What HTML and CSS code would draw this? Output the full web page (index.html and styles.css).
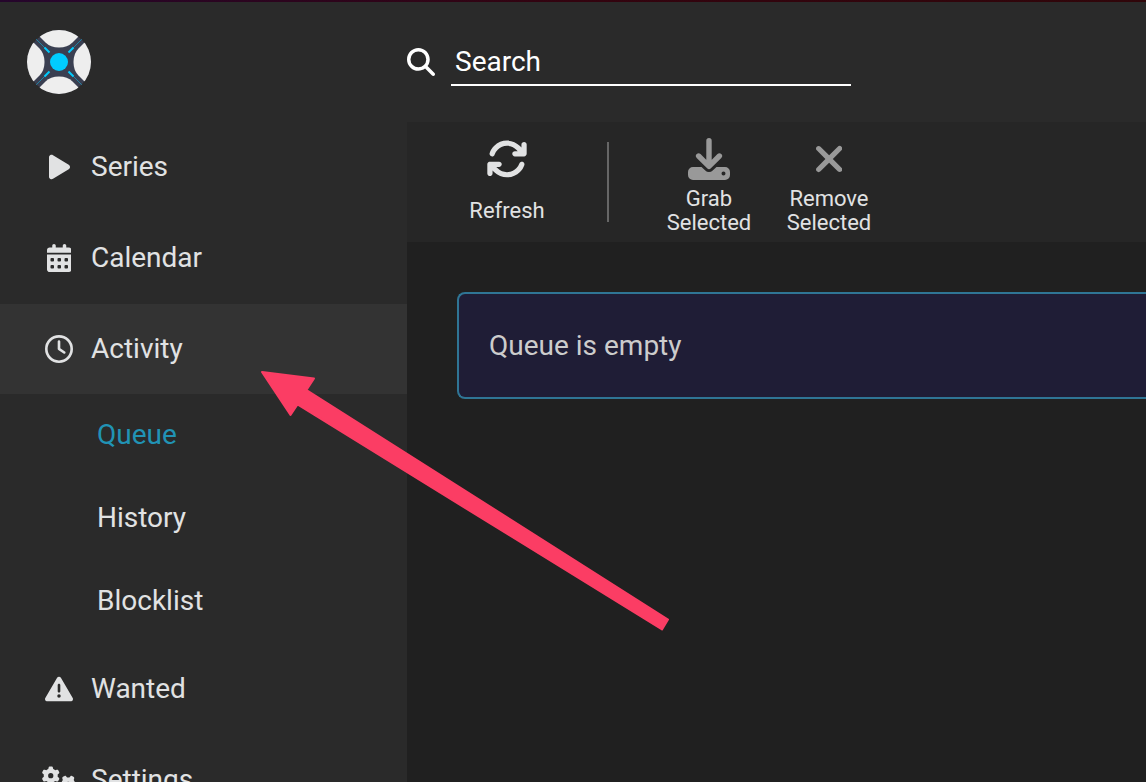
FILE: index.html
```html
<!DOCTYPE html>
<html lang="en">
<head>
<meta charset="utf-8">
<meta name="viewport" content="width=device-width, initial-scale=1">
<title>Queue</title>
<link rel="stylesheet" href="styles.css">
</head>
<body>
<div class="app">
  <header class="header">
    <a class="brand" href="#" aria-label="Home">
      <svg class="logo" viewBox="0 0 64 64" aria-hidden="true">
        <defs>
          <clipPath id="disc"><circle cx="32" cy="32" r="32"/></clipPath>
          <path id="lobe" d="M12.5 6.5 18.5 12.5Q23.5 17.5 32 17.5T45.500 12.500L51.500 6.500V-5H12.500Z"/>
          <g id="arm"><path d="M8.500 8.500 18 18" stroke="#2380a0" stroke-width="1"/><path d="M17.500 17.500 22.500 22.500" stroke="#0cf" stroke-width="2"/></g>
        </defs>
        <g clip-path="url(#disc)">
          <circle cx="32" cy="32" r="32" fill="#3a3f51"/>
          <g fill="#eee">
            <use href="#lobe"/>
            <use href="#lobe" transform="rotate(90 32 32)"/>
            <use href="#lobe" transform="rotate(180 32 32)"/>
            <use href="#lobe" transform="rotate(270 32 32)"/>
          </g>
          <use href="#arm"/>
          <use href="#arm" transform="rotate(90 32 32)"/>
          <use href="#arm" transform="rotate(180 32 32)"/>
          <use href="#arm" transform="rotate(270 32 32)"/>
          <circle cx="32" cy="32" r="9" fill="#0cf"/>
        </g>
      </svg>
    </a>
    <form class="search">
      <label class="search-label" for="search" aria-label="Search">
        <svg class="icon" viewBox="0 0 512 512" aria-hidden="true"><path d="M416 208c0 45.900-14.900 88.300-40 122.700L502.600 457.400c12.500 12.500 12.500 32.800 0 45.300s-32.800 12.500-45.300 0L330.700 376c-34.400 25.200-76.800 40-122.700 40C93.100 416 0 322.900 0 208S93.100 0 208 0S416 93.100 416 208zM208 352a144 144 0 1 0 0-288 144 144 0 1 0 0 288z"/></svg>
      </label>
      <input class="search-input" id="search" type="text" placeholder="Search">
    </form>
  </header>

  <nav class="sidebar" aria-label="Main">
    <ul class="menu">
      <li><a class="item" href="#"><span class="item-icon"><svg class="icon" viewBox="0 0 384 512" aria-hidden="true"><path d="M73 39c-14.800-9.100-33.400-9.400-48.500-.9S0 62.600 0 80V432c0 17.400 9.400 33.400 24.500 41.900s33.700 8.100 48.500-.9L361 297c14.300-8.700 23-24.200 23-41s-8.700-32.200-23-41L73 39z"/></svg></span>Series</a></li>
      <li><a class="item" href="#"><span class="item-icon"><svg class="icon" viewBox="0 0 448 512" aria-hidden="true"><path d="M128 0c17.700 0 32 14.300 32 32V64H288V32c0-17.700 14.300-32 32-32s32 14.300 32 32V64h48c26.500 0 48 21.500 48 48v48H0V112C0 85.500 21.500 64 48 64H96V32c0-17.700 14.300-32 32-32zM0 192H448V464c0 26.500-21.500 48-48 48H48c-26.500 0-48-21.500-48-48V192zm64 80v32c0 8.800 7.200 16 16 16h32c8.800 0 16-7.200 16-16V272c0-8.800-7.200-16-16-16H80c-8.800 0-16 7.200-16 16zm128 0v32c0 8.800 7.200 16 16 16h32c8.800 0 16-7.200 16-16V272c0-8.800-7.200-16-16-16H208c-8.800 0-16 7.200-16 16zm144-16c-8.800 0-16 7.200-16 16v32c0 8.800 7.200 16 16 16h32c8.800 0 16-7.200 16-16V272c0-8.800-7.200-16-16-16H336zM64 400v32c0 8.800 7.200 16 16 16h32c8.800 0 16-7.200 16-16V400c0-8.800-7.200-16-16-16H80c-8.800 0-16 7.200-16 16zm144-16c-8.800 0-16 7.200-16 16v32c0 8.800 7.200 16 16 16h32c8.800 0 16-7.200 16-16V400c0-8.800-7.200-16-16-16H208zm112 16v32c0 8.800 7.200 16 16 16h32c8.800 0 16-7.200 16-16V400c0-8.800-7.200-16-16-16H336c-8.800 0-16 7.200-16 16z"/></svg></span>Calendar</a></li>
      <li>
        <a class="item item-open" href="#"><span class="item-icon"><svg class="icon" viewBox="0 0 512 512" aria-hidden="true"><path d="M464 256A208 208 0 1 1 48 256a208 208 0 1 1 416 0zM0 256a256 256 0 1 0 512 0A256 256 0 1 0 0 256zM232 120V256c0 8 4 15.500 10.700 20l96 64c11 7.400 25.900 4.400 33.300-6.700s4.400-25.900-6.700-33.300L280 243.200V120c0-13.300-10.700-24-24-24s-24 10.700-24 24z"/></svg></span>Activity</a>
        <ul class="submenu">
          <li><a class="subitem subitem-current" href="#" aria-current="page">Queue</a></li>
          <li><a class="subitem" href="#">History</a></li>
          <li><a class="subitem" href="#">Blocklist</a></li>
        </ul>
      </li>
      <li><a class="item" href="#"><span class="item-icon"><svg class="icon" viewBox="0 0 512 512" aria-hidden="true"><path d="M256 32c14.200 0 27.300 7.500 34.500 19.800l216 368c7.300 12.400 7.300 27.700 .2 40.100S486.300 480 472 480H40c-14.300 0-27.600-7.700-34.700-20.100s-7-27.800 .2-40.100l216-368C228.700 39.500 241.800 32 256 32zm0 128c-13.300 0-24 10.700-24 24V296c0 13.300 10.700 24 24 24s24-10.700 24-24V184c0-13.300-10.700-24-24-24zm32 224a32 32 0 1 0 -64 0 32 32 0 1 0 64 0z"/></svg></span>Wanted</a></li>
      <li><a class="item" href="#"><span class="item-icon"><svg class="icon" viewBox="0 0 640 512" aria-hidden="true"><defs><path id="gear" d="M308.500 135.300c7.100-6.300 9.900-16.200 6.200-25c-2.300-5.300-4.800-10.500-7.600-15.500L304 89.400c-3-5-6.300-9.900-9.800-14.600c-5.700-7.600-15.700-10.100-24.700-7.100l-28.200 9.300c-10.700-8.800-23-16-36.200-20.900L199 27.100c-1.900-9.300-9.100-16.700-18.500-17.800C173.900 8.400 167.200 8 160.400 8h-.7c-6.800 0-13.500 .4-20.100 1.200c-9.400 1.100-16.600 8.600-18.500 17.800L115 56.100c-13.300 5-25.500 12.100-36.200 20.900L50.500 67.800c-9-3-19-.5-24.700 7.100c-3.500 4.700-6.800 9.600-9.900 14.600l-3 5.300c-2.800 5-5.300 10.200-7.600 15.600c-3.700 8.700-.9 18.600 6.200 25l22.200 19.800C32.600 161.900 32 168.900 32 176s.6 14.100 1.700 20.900L11.500 216.700c-7.100 6.300-9.900 16.200-6.200 25c2.300 5.300 4.800 10.500 7.600 15.600l3 5.200c3 5.100 6.300 9.900 9.900 14.600c5.700 7.600 15.700 10.100 24.700 7.100l28.200-9.300c10.700 8.800 23 16 36.200 20.900l6.100 29.100c1.900 9.300 9.100 16.700 18.500 17.800c6.700 .8 13.500 1.200 20.400 1.200s13.700-.4 20.400-1.200c9.400-1.100 16.600-8.600 18.500-17.800l6.100-29.100c13.300-5 25.500-12.100 36.200-20.900l28.200 9.300c9 3 19 .5 24.700-7.100c3.500-4.700 6.800-9.500 9.800-14.600l3.100-5.400c2.800-5 5.300-10.200 7.600-15.500c3.700-8.700 .9-18.600-6.200-25l-22.200-19.800c1.100-6.800 1.700-13.800 1.700-20.900s-.6-14.100-1.700-20.900l22.200-19.800zM112 176a48 48 0 1 1 96 0 48 48 0 1 1 -96 0z"/></defs><use href="#gear"/><use href="#gear" transform="translate(480 336) rotate(90) translate(-160 -176)"/></svg></span>Settings</a></li>
    </ul>
  </nav>

  <main class="content">
    <div class="toolbar" role="toolbar" aria-label="Queue actions">
      <button class="tool" type="button">
        <svg class="tool-icon" viewBox="0 0 512 512" aria-hidden="true"><path d="M105.100 202.600c7.700-21.800 20.200-42.300 37.800-59.800c62.500-62.500 163.800-62.500 226.300 0L386.300 160H352c-17.700 0-32 14.300-32 32s14.300 32 32 32H463.900c17.700 0 32-14.300 32-32V80c0-17.700-14.300-32-32-32s-32 14.300-32 32v35.200L414.400 97.600c-87.500-87.500-229.300-87.500-316.800 0C73.200 122 55.600 150.700 44.800 181.400c-5.900 16.700 2.900 34.900 19.500 40.800s34.900-2.900 40.800-19.500zM39 289.300c-5 1.500-9.800 4.200-13.700 8.200c-4 4-6.700 8.800-8.100 14c-.3 1.200-.6 2.500-.8 3.800c-.3 1.700-.4 3.400-.4 5.100V432c0 17.700 14.300 32 32 32s32-14.300 32-32V396.900l17.600 17.500c87.500 87.400 229.300 87.400 316.700 0c24.400-24.400 42.100-53.100 52.900-83.700c5.900-16.700-2.900-34.900-19.500-40.800s-34.900 2.900-40.800 19.500c-7.700 21.800-20.200 42.300-37.800 59.800c-62.500 62.500-163.800 62.500-226.300 0L125.600 352H160c17.700 0 32-14.300 32-32s-14.300-32-32-32H48.400c-1.600 0-3.200 .1-4.800 .3s-3.100 .5-4.600 1z"/></svg>
        <span class="tool-label">Refresh</span>
      </button>
      <div class="separator"></div>
      <button class="tool" type="button" disabled>
        <svg class="tool-icon" viewBox="0 0 42 42" aria-hidden="true"><path d="M21 2.800V28M10.600 18 21 28.400 31.400 18" fill="none" stroke="currentColor" stroke-width="5.400" stroke-linecap="round" stroke-linejoin="round"/><path fill-rule="evenodd" d="M5 29H13.500L17.300 32.500a5.300 5.300 0 0 0 7.400 0L28.500 29H37a5 5 0 0 1 5 5V37a5 5 0 0 1-5 5H5a5 5 0 0 1-5-5V34a5 5 0 0 1 5-5ZM35.500 33.500a2 2 0 1 0 0 4 2 2 0 0 0 0-4Z"/></svg>
        <span class="tool-label">Grab Selected</span>
      </button>
      <button class="tool" type="button" disabled>
        <svg class="tool-icon" viewBox="0 0 320 512" aria-hidden="true"><path d="M310.600 150.600c12.500-12.500 12.500-32.800 0-45.300s-32.800-12.500-45.300 0L160 210.700 54.600 105.400c-12.500-12.500-32.800-12.500-45.300 0s-12.500 32.800 0 45.300L114.700 256 9.400 361.400c-12.500 12.500-12.500 32.800 0 45.300s32.800 12.500 45.300 0L160 301.300 265.400 406.600c12.500 12.500 32.800 12.500 45.300 0s12.500-32.800 0-45.300L205.300 256 310.600 150.600z"/></svg>
        <span class="tool-label">Remove Selected</span>
      </button>
    </div>
    <div class="page">
      <div class="alert" role="status">Queue is empty</div>
    </div>
  </main>

  <svg class="pointer" viewBox="0 0 410 262" aria-hidden="true"><path d="M1 2 53 8.500 45.500 20 407 249.500 401 259.500 36.500 34.500 29.500 45Z" fill="#fb3d64" stroke="#fb3d64" stroke-width="2" stroke-linejoin="round"/></svg>
</div>
</body>
</html>
```
FILE: styles.css
```css
* {
  box-sizing: border-box;
}

body {
  margin: 0;
  background: #202020;
  color: #e1e2e3;
  font-family: Roboto, "Liberation Sans", sans-serif;
  font-size: 28px;
  line-height: 42px;
}

ul {
  margin: 0;
  padding: 0;
  list-style: none;
}

a {
  color: inherit;
  text-decoration: none;
}

.app {
  position: relative;
  display: grid;
  grid-template-columns: 407px minmax(0, 1fr);
  grid-template-rows: auto minmax(0, 1fr);
  height: 100vh;
  overflow: hidden;
}

.app::before {
  content: "";
  grid-column: 1 / -1;
  height: 2px;
  background: linear-gradient(90deg, #25052c, #33030f 50%, #30060a);
}

.app {
  grid-template-rows: 2px auto minmax(0, 1fr);
}

.header {
  grid-column: 1 / -1;
  display: grid;
  grid-template-columns: subgrid;
  align-items: center;
  height: 120px;
  background: #2a2a2a;
}

.brand {
  display: flex;
  padding-left: 27px;
}

.logo {
  width: 64px;
  height: 64px;
}

.icon {
  display: block;
  height: 28px;
  fill: currentColor;
}

.search {
  display: flex;
  align-items: center;
  gap: 16px;
  color: #fff;
}

.search-input {
  width: 400px;
  height: 48px;
  padding: 0 4px;
  border: 0;
  border-bottom: 2px solid #fff;
  border-radius: 0;
  outline: 0;
  background: transparent;
  color: #fff;
  font: inherit;
}

.search-input::placeholder {
  color: #fff;
  opacity: 1;
}

.sidebar {
  background: #2a2a2a;
  overflow: hidden;
}

.menu {
  display: grid;
  gap: 1px;
}

.item {
  display: flex;
  align-items: center;
  gap: 14px;
  padding: 24px 41px;
}

.item-open {
  background: #333;
}

.item-icon {
  display: flex;
  justify-content: center;
  width: 36px;
}

.subitem {
  display: block;
  padding: 20px 97px 21px;
}

.subitem-current {
  color: #2193b5;
}

.content {
  min-width: 0;
}

.toolbar {
  display: flex;
  align-items: flex-start;
  height: 120px;
  padding-left: 40px;
  background: #262626;
}

.tool {
  display: flex;
  flex-direction: column;
  align-items: center;
  gap: 7px;
  width: 120px;
  padding: 16px 10px 0;
  border: 0;
  background: transparent;
  color: #e1e2e3;
  font: inherit;
  font-size: 22px;
  line-height: 24px;
}

.tool-icon {
  height: 42px;
  fill: currentColor;
}

.tool:disabled .tool-icon {
  color: #999;
}

.tool-label {
  display: flex;
  align-items: center;
  height: 48px;
}

.separator {
  width: 2px;
  height: 80px;
  margin: 20px 40px;
  background: #666;
}

.page {
  padding: 50px 0 0 50px;
}

.alert {
  padding: 30px;
  border: 2px solid #2f7595;
  border-right: 0;
  border-radius: 8px 0 0 8px;
  background: #1f1d36;
  color: #ccc;
  line-height: 43px;
}

/* Callout arrow laid over the page */
.pointer {
  position: absolute;
  top: 370px;
  left: 261px;
  width: 410px;
  height: 262px;
  pointer-events: none;
}
```
